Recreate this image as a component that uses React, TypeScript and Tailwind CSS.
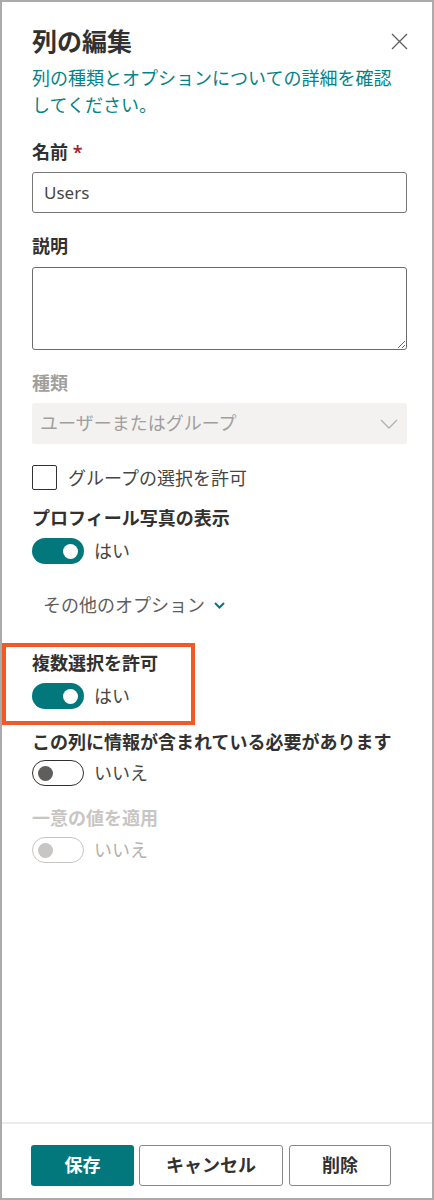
import React from "react";

const font = {
  fontFamily: '"Noto Sans", "Noto Sans CJK JP", sans-serif',
};

const Toggle = ({ on, disabled }: { on: boolean; disabled?: boolean }) => {
  if (on) {
    return (
      <div className="flex h-[26px] w-[52px] items-center justify-end rounded-full bg-[#03787c] pr-[6px]">
        <div className="h-[15px] w-[15px] rounded-full bg-white" />
      </div>
    );
  }
  return (
    <div
      className={`flex h-[26px] w-[52px] items-center rounded-full border-[1.5px] pl-[5px] ${
        disabled ? "border-[#c8c6c4]" : "border-[#323130]"
      }`}
    >
      <div
        className={`h-[15px] w-[15px] rounded-full ${
          disabled ? "bg-[#c8c6c4]" : "bg-[#605e5c]"
        }`}
      />
    </div>
  );
};

const ToggleRow = ({
  on,
  disabled,
  label,
  className,
}: {
  on: boolean;
  disabled?: boolean;
  label: string;
  className?: string;
}) => (
  <div className={`flex h-[26px] items-center gap-[10px] ${className ?? ""}`}>
    <Toggle on={on} disabled={disabled} />
    <span
      className={`text-[18px] leading-[26px] ${
        disabled ? "text-[#b3b0ad]" : "text-[#484644]"
      }`}
    >
      {label}
    </span>
  </div>
);

const App = () => {
  return (
    <div
      style={font}
      className="flex h-[1200px] w-[434px] flex-col border-2 border-[#ababab] bg-white text-[#323130]"
    >
      <div className="flex flex-1 flex-col pl-[30px] pr-[25px] pt-[23px]">
        <div className="flex h-[32px] items-center justify-between">
          <h1 className="text-[25px] font-bold leading-[32px] text-[#323130]">
            列の編集
          </h1>
          <svg width="17" height="17" viewBox="0 0 17 17" className="mr-[-1px]">
            <path
              d="M1 1 L16 16 M16 1 L1 16"
              stroke="#605e5c"
              strokeWidth="1.3"
              fill="none"
            />
          </svg>
        </div>

        <p className="mt-[8px] text-[18px] leading-[27px] text-[#038387]">
          列の種類とオプションについての詳細を確認
          <br />
          してください。
        </p>

        <div className="mt-[20px] h-[26px] text-[18px] font-semibold leading-[26px]">
          名前 <span className="text-[#a4262c]">*</span>
        </div>
        <input
          readOnly
          defaultValue="Users"
          style={font}
          className="mt-[7px] h-[41px] w-full rounded-[3px] border border-[#797775] px-[11px] text-[17px] text-[#484644] outline-none"
        />

        <div className="mt-[20px] h-[26px] text-[18px] font-semibold leading-[26px]">
          説明
        </div>
        <textarea
          style={font}
          className="mt-[8px] h-[83px] w-full rounded-[3px] border border-[#6e6c6a] px-[11px] text-[17px] outline-none"
        />

        <div className="mt-[20px] h-[26px] text-[18px] font-semibold leading-[26px] text-[#a19f9d]">
          種類
        </div>
        <div className="mt-[7px] flex h-[41px] items-center justify-between rounded-[2px] bg-[#f3f2f1] pl-[8px] pr-[9px]">
          <span className="text-[18px] text-[#a19f9d]">
            ユーザーまたはグループ
          </span>
          <svg width="18" height="10" viewBox="0 0 18 10">
            <path
              d="M1 1 L9 9 L17 1"
              stroke="#b3b0ad"
              strokeWidth="1.3"
              fill="none"
            />
          </svg>
        </div>

        <div className="mt-[21px] flex h-[25px] items-center gap-[11px]">
          <div className="h-[25px] w-[25px] rounded-[2px] border-[1.5px] border-[#323130]" />
          <span className="text-[18px] leading-[26px] text-[#484644]">
            グループの選択を許可
          </span>
        </div>

        <div className="mt-[15px] h-[26px] text-[18px] font-semibold leading-[26px]">
          プロフィール写真の表示
        </div>
        <ToggleRow on label="はい" className="mt-[7px]" />

        <div className="mt-[28px] flex h-[26px] items-center gap-[9px] pl-[11px]">
          <span className="text-[18px] leading-[26px] text-[#605e5c]">
            その他のオプション
          </span>
          <svg width="11" height="7" viewBox="0 0 11 7">
            <path
              d="M1 1 L5.5 5.5 L10 1"
              stroke="#03787c"
              strokeWidth="2"
              fill="none"
            />
          </svg>
        </div>

        <div className="ml-[-30px] mt-[25px] w-[193px] border-[4px] border-[#f15a22] pb-[12px] pl-[26px] pt-[3px]">
          <div className="h-[26px] text-[18px] font-semibold leading-[26px]">
            複数選択を許可
          </div>
          <ToggleRow on label="はい" className="mt-[7px]" />
        </div>

        <div className="mt-[4px] h-[26px] text-[18px] font-semibold leading-[26px]">
          この列に情報が含まれている必要があります
        </div>
        <ToggleRow on={false} label="いいえ" className="mt-[5px]" />

        <div className="mt-[19px] h-[26px] text-[18px] font-semibold leading-[26px] text-[#c8c6c4]">
          一意の値を適用
        </div>
        <ToggleRow on={false} disabled label="いいえ" className="mt-[6px]" />
      </div>

      <div className="flex gap-[5px] border-t-2 border-[#edebe9] pb-[12px] pl-[29px] pt-[21px]">
        <button className="h-[41px] w-[103px] rounded-[3px] bg-[#03787c] text-[18px] font-semibold text-white">
          保存
        </button>
        <button className="h-[41px] w-[144px] rounded-[3px] border border-[#8a8886] bg-white text-[18px] font-semibold text-[#323130]">
          キャンセル
        </button>
        <button className="ml-[1px] h-[41px] w-[102px] rounded-[3px] border border-[#8a8886] bg-white text-[18px] font-semibold text-[#323130]">
          削除
        </button>
      </div>
    </div>
  );
};

export default App;
